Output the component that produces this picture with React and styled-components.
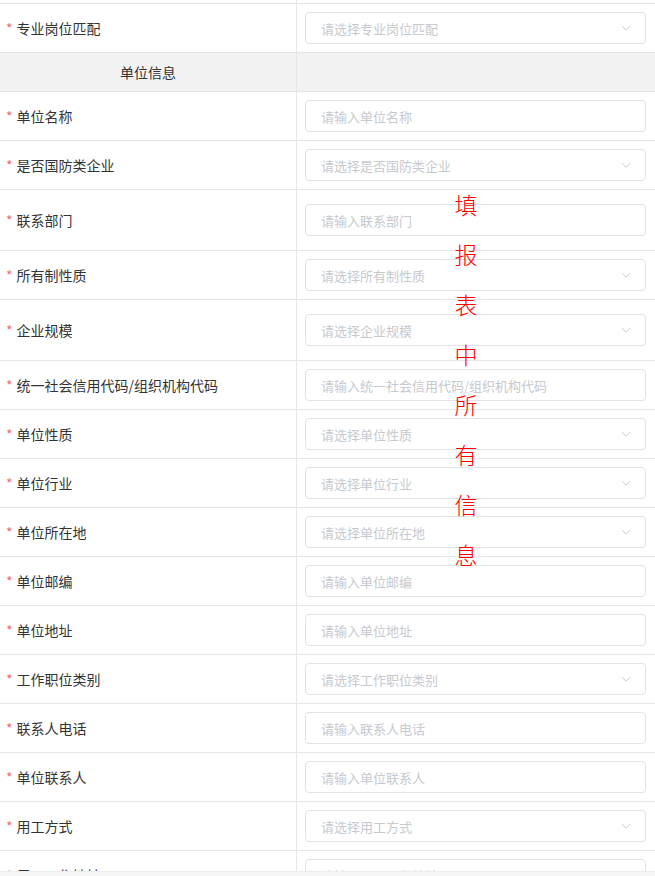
import React from 'react';
import styled, { createGlobalStyle } from 'styled-components';

const GlobalStyle = createGlobalStyle`
  html, body {
    margin: 0;
    padding: 0;
    background: #fff;
  }
  body {
    font-family: "Noto Sans CJK SC", "Noto Sans", sans-serif;
    font-size: 14px;
    color: #333;
  }
`;

const Page = styled.div`
  position: relative;
  width: 655px;
  height: 876px;
  display: flex;
  flex-direction: column;
  overflow: hidden;
`;

const Viewport = styled.div`
  height: 871px;
  overflow: hidden;
`;

const Table = styled.div`
  margin-top: -45px;
  display: flex;
  flex-direction: column;
`;

const Row = styled.div`
  display: grid;
  grid-template-columns: 297px 1fr;
  border-bottom: 1px solid #e6e6e6;
  background: ${(p) => (p.$head ? '#f2f2f2' : '#fff')};
  height: ${(p) => (p.$head ? 38 : p.$tall ? 60 : 48)}px;
`;

const LabelCell = styled.div`
  display: flex;
  align-items: center;
  justify-content: ${(p) => (p.$center ? 'center' : 'flex-start')};
  padding-left: ${(p) => (p.$center ? 0 : 6)}px;
  border-right: 1px solid #e6e6e6;
  color: #333;
  white-space: nowrap;
`;

const Star = styled.span`
  color: #f56c6c;
  margin-right: 4px;
  font-size: 14px;
`;

const FieldCell = styled.div`
  display: flex;
  align-items: center;
  padding: 0 9px 0 8px;
`;

const Box = styled.div`
  flex: 1;
  height: 30px;
  border: 1px solid #dfe2e8;
  border-radius: 4px;
  display: flex;
  align-items: center;
  justify-content: space-between;
  padding: 0 12px 0 15px;
  color: #c6c9cf;
  font-size: 13px;
  background: #fff;
`;

const Chevron = () => (
  <svg width="14" height="14" viewBox="0 0 14 14" fill="none">
    <path d="M3 5.2l4 4 4-4" stroke="#c6c9cf" strokeWidth="1" />
  </svg>
);

const BottomBar = styled.div`
  flex: 1;
  background: #f5f5f5;
  border-top: 1px solid #ededed;
`;

const Stamp = styled.div`
  position: absolute;
  left: 454px;
  top: 179px;
  width: 24px;
  display: flex;
  flex-direction: column;
  color: #ff0000;
  font-size: 23px;
  font-weight: 300;
  line-height: 50px;
  text-align: center;
  pointer-events: none;
`;

const fields = [
  { label: '专业岗位匹配', select: true },
  { head: '单位信息' },
  { label: '单位名称' },
  { label: '是否国防类企业', select: true },
  { label: '联系部门', tall: true },
  { label: '所有制性质', select: true },
  { label: '企业规模', select: true, tall: true },
  { label: '统一社会信用代码/组织机构代码' },
  { label: '单位性质', select: true },
  { label: '单位行业', select: true },
  { label: '单位所在地', select: true },
  { label: '单位邮编' },
  { label: '单位地址' },
  { label: '工作职位类别', select: true },
  { label: '联系人电话' },
  { label: '单位联系人' },
  { label: '用工方式', select: true },
  { label: '用工工作地址' },
];

const Field = ({ label, select, tall }) => (
  <Row $tall={tall}>
    <LabelCell>
      <Star>*</Star>
      {label}
    </LabelCell>
    <FieldCell>
      <Box>
        <span>{(select ? '请选择' : '请输入') + label}</span>
        {select && <Chevron />}
      </Box>
    </FieldCell>
  </Row>
);

const App = () => (
  <>
    <GlobalStyle />
    <Page>
      <Viewport>
        <Table>
          <Field label="专业技能等级" select />
          {fields.map((f, i) =>
            f.head ? (
              <Row key={i} $head>
                <LabelCell $center>{f.head}</LabelCell>
                <div />
              </Row>
            ) : (
              <Field key={i} {...f} />
            )
          )}
        </Table>
      </Viewport>
      <BottomBar />
      <Stamp>
        {'填报表中所有信息'.split('').map((c, i) => (
          <span key={i}>{c}</span>
        ))}
      </Stamp>
    </Page>
  </>
);

export default App;
